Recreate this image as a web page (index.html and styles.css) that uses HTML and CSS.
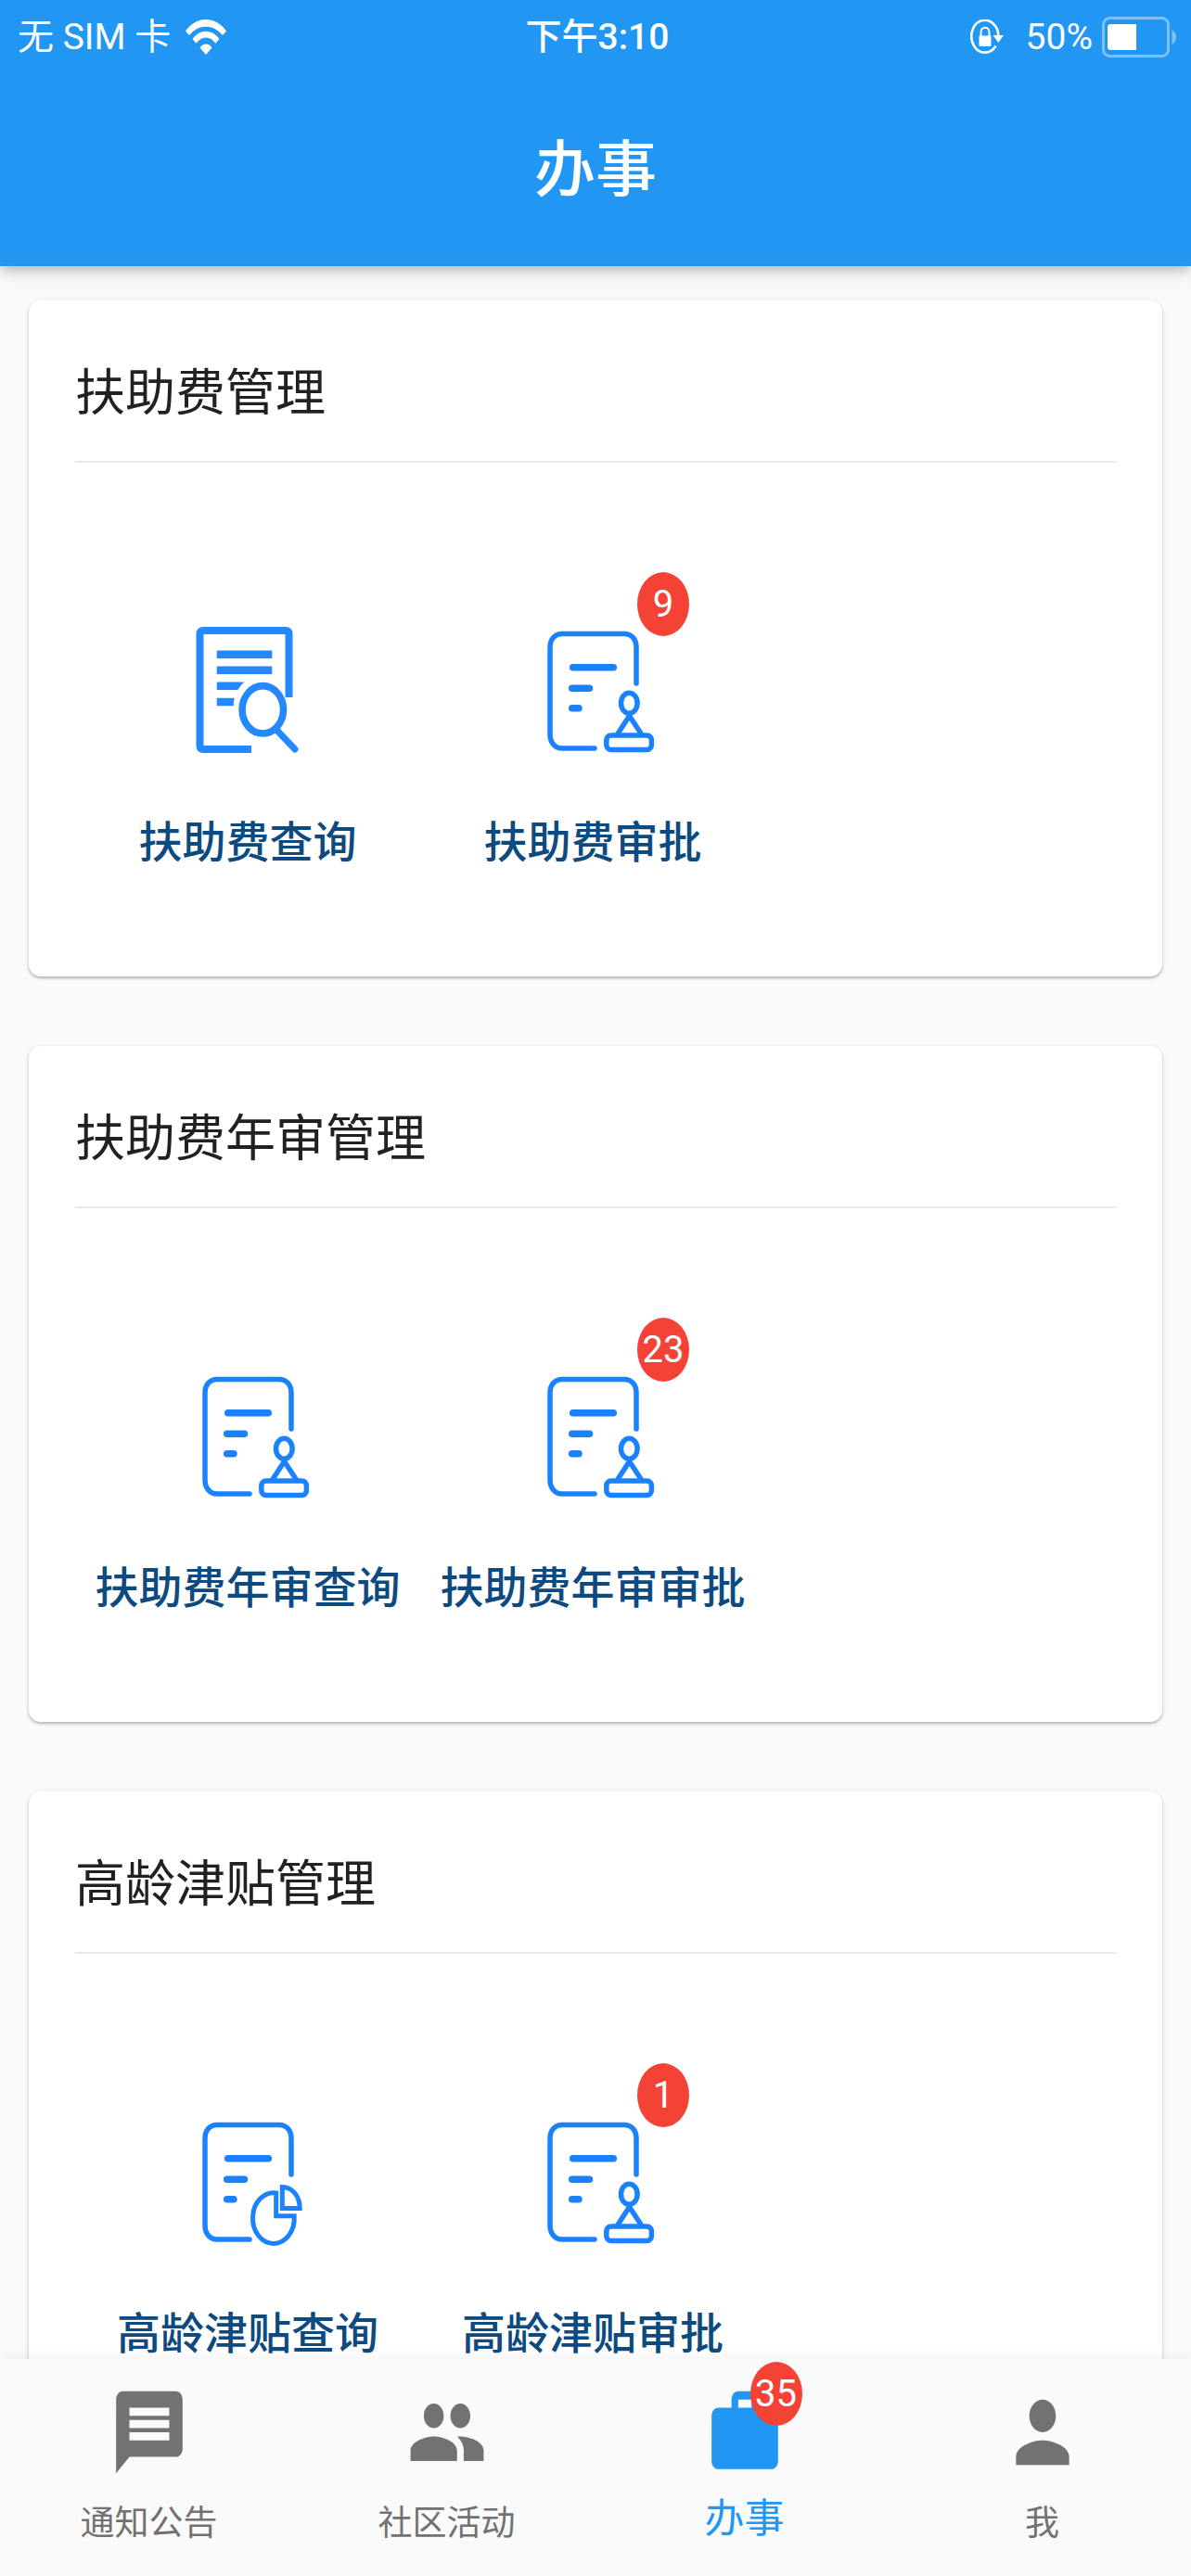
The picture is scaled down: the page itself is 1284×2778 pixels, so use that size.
FILE: index.html
```html
<!DOCTYPE html>
<html lang="zh-CN">
<head>
<meta charset="utf-8">
<meta name="viewport" content="width=device-width, initial-scale=1">
<title>办事</title>
<link rel="stylesheet" href="styles.css">
</head>
<body>
<svg class="sprite" aria-hidden="true">
  <symbol id="icon-search-doc" viewBox="0 0 140 150">
    <g fill="none" stroke="#2489ff" stroke-width="8">
      <path d="M114.500 82V14Q114.500 10 110.500 10H22.500Q18.500 10 18.500 14V134Q18.500 138 22.500 138H74"/>
      <path stroke-width="8.500" d="M36.700 35.700H96.300M36.700 52.700H96.300"/>
      <ellipse cx="86.300" cy="95.300" rx="22.200" ry="25.700" stroke-width="7.600"/>
      <path stroke-width="7" stroke-linecap="round" d="M101.500 117.500L121 138"/>
    </g>
    <path fill="#2489ff" d="M36.700 65.500H66.500Q62 69 59.300 74H36.700ZM36.700 82.700H55.600L54.700 91.200H36.700Z"/>
  </symbol>
  <symbol id="icon-page" viewBox="0 0 140 150">
    <g fill="none" stroke="#1b82ff" stroke-linecap="round">
      <path stroke-width="5.500" d="M117 67V28C117 19 111.500 13.500 104 13.500H37C29.500 13.500 24 19 24 28V122C24 131 29.500 137 37 137H72"/>
      <path stroke-width="7.500" d="M48.700 49.700H92.300M47.700 72.300H66.500M47.700 93.700H55"/>
    </g>
  </symbol>
  <symbol id="icon-approve" viewBox="0 0 140 150">
    <use href="#icon-page"/>
    <g fill="none" stroke="#1b82ff" stroke-width="5.500">
      <ellipse cx="109.300" cy="88.300" rx="8.800" ry="11"/>
      <path d="M96.500 122L109.500 102L122.700 122"/>
      <rect x="84.800" y="123" width="48.600" height="15.500" rx="5"/>
    </g>
  </symbol>
  <symbol id="icon-report" viewBox="0 0 140 150">
    <use href="#icon-page"/>
    <g fill="none" stroke="#1b82ff" stroke-width="5">
      <path d="M100.700 111.800V87A22.400 27.300 0 1 0 120.200 111.800Z"/>
      <path d="M107.300 80.600V103.500H126.200C126.200 90 118 81 107.300 80.600Z"/>
    </g>
  </symbol>
</svg>

<header class="app-bar">
  <div class="status">
    <div class="status-left">
      <span>无 SIM 卡</span>
      <svg class="wifi" viewBox="0 0 44 38" aria-hidden="true">
        <path fill="#fff" d="M0 12.500C11.500-4.200 32.500-4.200 44 12.500L40 17C30 4.500 14 4.500 4 17ZM7.500 21C15.500 10 28.500 10 36.500 21L32.500 25.800C26 17.500 18 17.500 11.500 25.800ZM15.500 30.500C18.500 25 25.500 25 28.500 30.500L22 38Z"/>
      </svg>
    </div>
    <div class="status-time">下午3:10</div>
    <div class="status-right">
      <svg class="lock" viewBox="0 0 36 38" aria-hidden="true">
        <path fill="none" stroke="#fff" stroke-width="2.600" d="M27.500 28.500A14.500 17.500 0 1 1 30.300 18"/>
        <path fill="#fff" d="M24.500 17H36L30.300 25ZM9.500 18.500Q9.500 17.500 10.500 17.500H21.500Q22.500 17.500 22.500 18.500V28Q22.500 29 21.500 29H10.500Q9.500 29 9.500 28Z"/>
        <path fill="none" stroke="#fff" stroke-width="2" d="M11.500 18V14C11.500 7 20.500 7 20.500 14V18"/>
      </svg>
      <span>50%</span>
      <svg class="battery" viewBox="0 0 81 44" aria-hidden="true">
        <rect x="1.500" y="1.500" width="70" height="41" rx="7" fill="none" stroke="#7fc1fa" stroke-width="3"/>
        <path fill="#fff" d="M9 8H37V36H9Q6 36 6 32V12Q6 8 9 8Z"/>
        <path fill="#7fc1fa" d="M75.500 14Q80 17 80 22Q80 27 75.500 30Z"/>
      </svg>
    </div>
  </div>
  <h1 class="app-title">办事</h1>
</header>

<main class="content">
  <section class="card">
    <h2 class="card-title">扶助费管理</h2>
    <div class="tiles">
      <button class="tile" type="button">
        <span class="tile-icon"><svg aria-hidden="true"><use href="#icon-search-doc"/></svg></span>
        <span class="tile-label">扶助费查询</span>
      </button>
      <button class="tile" type="button">
        <span class="tile-icon"><svg aria-hidden="true"><use href="#icon-approve"/></svg><span class="badge">9</span></span>
        <span class="tile-label">扶助费审批</span>
      </button>
    </div>
  </section>
  <section class="card">
    <h2 class="card-title">扶助费年审管理</h2>
    <div class="tiles">
      <button class="tile" type="button">
        <span class="tile-icon"><svg aria-hidden="true"><use href="#icon-approve"/></svg></span>
        <span class="tile-label">扶助费年审查询</span>
      </button>
      <button class="tile" type="button">
        <span class="tile-icon"><svg aria-hidden="true"><use href="#icon-approve"/></svg><span class="badge">23</span></span>
        <span class="tile-label">扶助费年审审批</span>
      </button>
    </div>
  </section>
  <section class="card">
    <h2 class="card-title">高龄津贴管理</h2>
    <div class="tiles">
      <button class="tile" type="button">
        <span class="tile-icon"><svg aria-hidden="true"><use href="#icon-report"/></svg></span>
        <span class="tile-label">高龄津贴查询</span>
      </button>
      <button class="tile" type="button">
        <span class="tile-icon"><svg aria-hidden="true"><use href="#icon-approve"/></svg><span class="badge">1</span></span>
        <span class="tile-label">高龄津贴审批</span>
      </button>
    </div>
  </section>
</main>

<nav class="tabs">
  <a class="tab" href="#notices">
    <span class="tab-icon"><svg viewBox="0 0 24 24" preserveAspectRatio="none" aria-hidden="true"><path d="M20 2H4c-1.100 0-1.990.9-1.990 2L2 22l4-4h14c1.100 0 2-.9 2-2V4c0-1.100-.9-2-2-2zm-2 12H6v-2h12v2zm0-3H6V9h12v2zm0-3H6V6h12v2z"/></svg></span>
    <span class="tab-label">通知公告</span>
  </a>
  <a class="tab" href="#events">
    <span class="tab-icon"><svg viewBox="0 0 24 24" preserveAspectRatio="none" aria-hidden="true"><path d="M16 11c1.660 0 2.990-1.340 2.990-3S17.660 5 16 5c-1.660 0-3 1.340-3 3s1.340 3 3 3zm-8 0c1.660 0 2.990-1.340 2.990-3S9.660 5 8 5C6.340 5 5 6.340 5 8s1.340 3 3 3zm0 2c-2.330 0-7 1.170-7 3.500V19h14v-2.500c0-2.330-4.670-3.500-7-3.500zm8 0c-.29 0-.62.02-.97.05 1.160.84 1.970 1.970 1.970 3.450V19h6v-2.500c0-2.330-4.670-3.500-7-3.500z"/></svg></span>
    <span class="tab-label">社区活动</span>
  </a>
  <a class="tab tab-active" href="#work" aria-current="page">
    <span class="tab-icon"><svg viewBox="0 0 24 24" preserveAspectRatio="none" aria-hidden="true"><path d="M20 6h-4V4c0-1.110-.89-2-2-2h-4c-1.110 0-2 .89-2 2v2H4c-1.110 0-1.990.89-1.990 2L2 19c0 1.110.89 2 2 2h16c1.110 0 2-.89 2-2V8c0-1.110-.89-2-2-2zm-6 0h-4V4h4v2z"/></svg><span class="badge">35</span></span>
    <span class="tab-label">办事</span>
  </a>
  <a class="tab" href="#me">
    <span class="tab-icon"><svg viewBox="0 0 24 24" preserveAspectRatio="none" aria-hidden="true"><path d="M12 12c2.210 0 4-1.790 4-4s-1.790-4-4-4-4 1.790-4 4 1.790 4 4 4zm0 2c-2.670 0-8 1.340-8 4v2h16v-2c0-2.660-5.330-4-8-4z"/></svg></span>
    <span class="tab-label">我</span>
  </a>
</nav>
</body>
</html>
```
FILE: styles.css
```css
* {
  box-sizing: border-box;
}

body {
  margin: 0;
  height: 100vh;
  display: flex;
  flex-direction: column;
  overflow: hidden;
  background: #fafafa;
  color: #212121;
  font-family: Roboto, "Noto Sans CJK SC", sans-serif;
}

svg {
  display: block;
}

.sprite {
  position: absolute;
  width: 0;
  height: 0;
}

.app-bar {
  flex: none;
  position: relative;
  z-index: 1;
  background: #2196f3;
  color: #fff;
  box-shadow: 0 4px 12px rgba(0, 0, 0, 0.22), 0 8px 24px rgba(0, 0, 0, 0.08);
}

.status {
  display: grid;
  grid-template-columns: 1fr auto 1fr;
  align-items: center;
  height: 77px;
  padding: 0 15px 0 19px;
  font-size: 39px;
  line-height: 80px;
}

.status-left,
.status-right {
  display: flex;
  align-items: center;
}

.status-left {
  gap: 16px;
}

.status-right {
  justify-content: flex-end;
}

.status-time {
  font-weight: 500;
}

.wifi {
  width: 44px;
  height: 38px;
}

.lock {
  width: 36px;
  height: 38px;
  margin-right: 24px;
}

.battery {
  width: 81px;
  height: 44px;
  margin-left: 10px;
}

.app-title {
  margin: 0;
  padding-top: 4px;
  font-size: 66px;
  font-weight: 500;
  line-height: 206px;
  text-align: center;
}

.content {
  flex: 1;
  min-height: 0;
  overflow-y: auto;
  scrollbar-width: none;
  display: flex;
  flex-direction: column;
  gap: 75px;
  padding: 37px 31px;
}

.card {
  flex: none;
  padding: 0 50px 109px;
  border-radius: 13px;
  background: #fff;
  box-shadow: 0 2px 3px rgba(0, 0, 0, 0.24), 0 1px 6px rgba(0, 0, 0, 0.08);
}

.card-title {
  margin: 0;
  padding: 63px 0 34px;
  border-bottom: 2px solid #ebebeb;
  font-size: 54px;
  font-weight: 400;
  line-height: 76px;
}

.tiles {
  display: grid;
  grid-template-columns: repeat(3, 1fr);
  padding: 171px 6px 0 0;
}

.tile {
  display: flex;
  flex-direction: column;
  align-items: center;
  gap: 54px;
  padding: 0;
  border: 0;
  background: none;
  color: #0d4a80;
  font: inherit;
}

.tile-icon {
  position: relative;
  width: 140px;
  height: 150px;
}

.tile-icon svg {
  width: 140px;
  height: 150px;
}

.tile-label {
  font-size: 47px;
  font-weight: 500;
  line-height: 70px;
  white-space: nowrap;
}

.badge {
  position: absolute;
  top: -53px;
  right: -34px;
  width: 56px;
  height: 69px;
  border-radius: 50%;
  background: #f44336;
  color: #fff;
  font-size: 40px;
  line-height: 70px;
  text-align: center;
}

.tabs {
  flex: none;
  position: relative;
  z-index: 1;
  display: grid;
  grid-template-columns: repeat(4, 1fr);
  height: 234px;
  background: #fafafa;
  box-shadow: 0 -2px 16px rgba(0, 0, 0, 0.06);
}

.tab {
  display: flex;
  flex-direction: column;
  align-items: center;
  gap: 20px;
  padding-top: 26px;
  color: #727272;
  font-size: 37px;
  line-height: 52px;
  text-decoration: none;
}

.tab-active {
  gap: 14px;
  color: #2196f3;
  font-size: 43px;
}

.tab-icon {
  position: relative;
  width: 86px;
  height: 106px;
}

.tab-icon svg {
  width: 86px;
  height: 106px;
  fill: currentColor;
}

.tab-icon .badge {
  top: -23px;
  right: -19px;
}
```
